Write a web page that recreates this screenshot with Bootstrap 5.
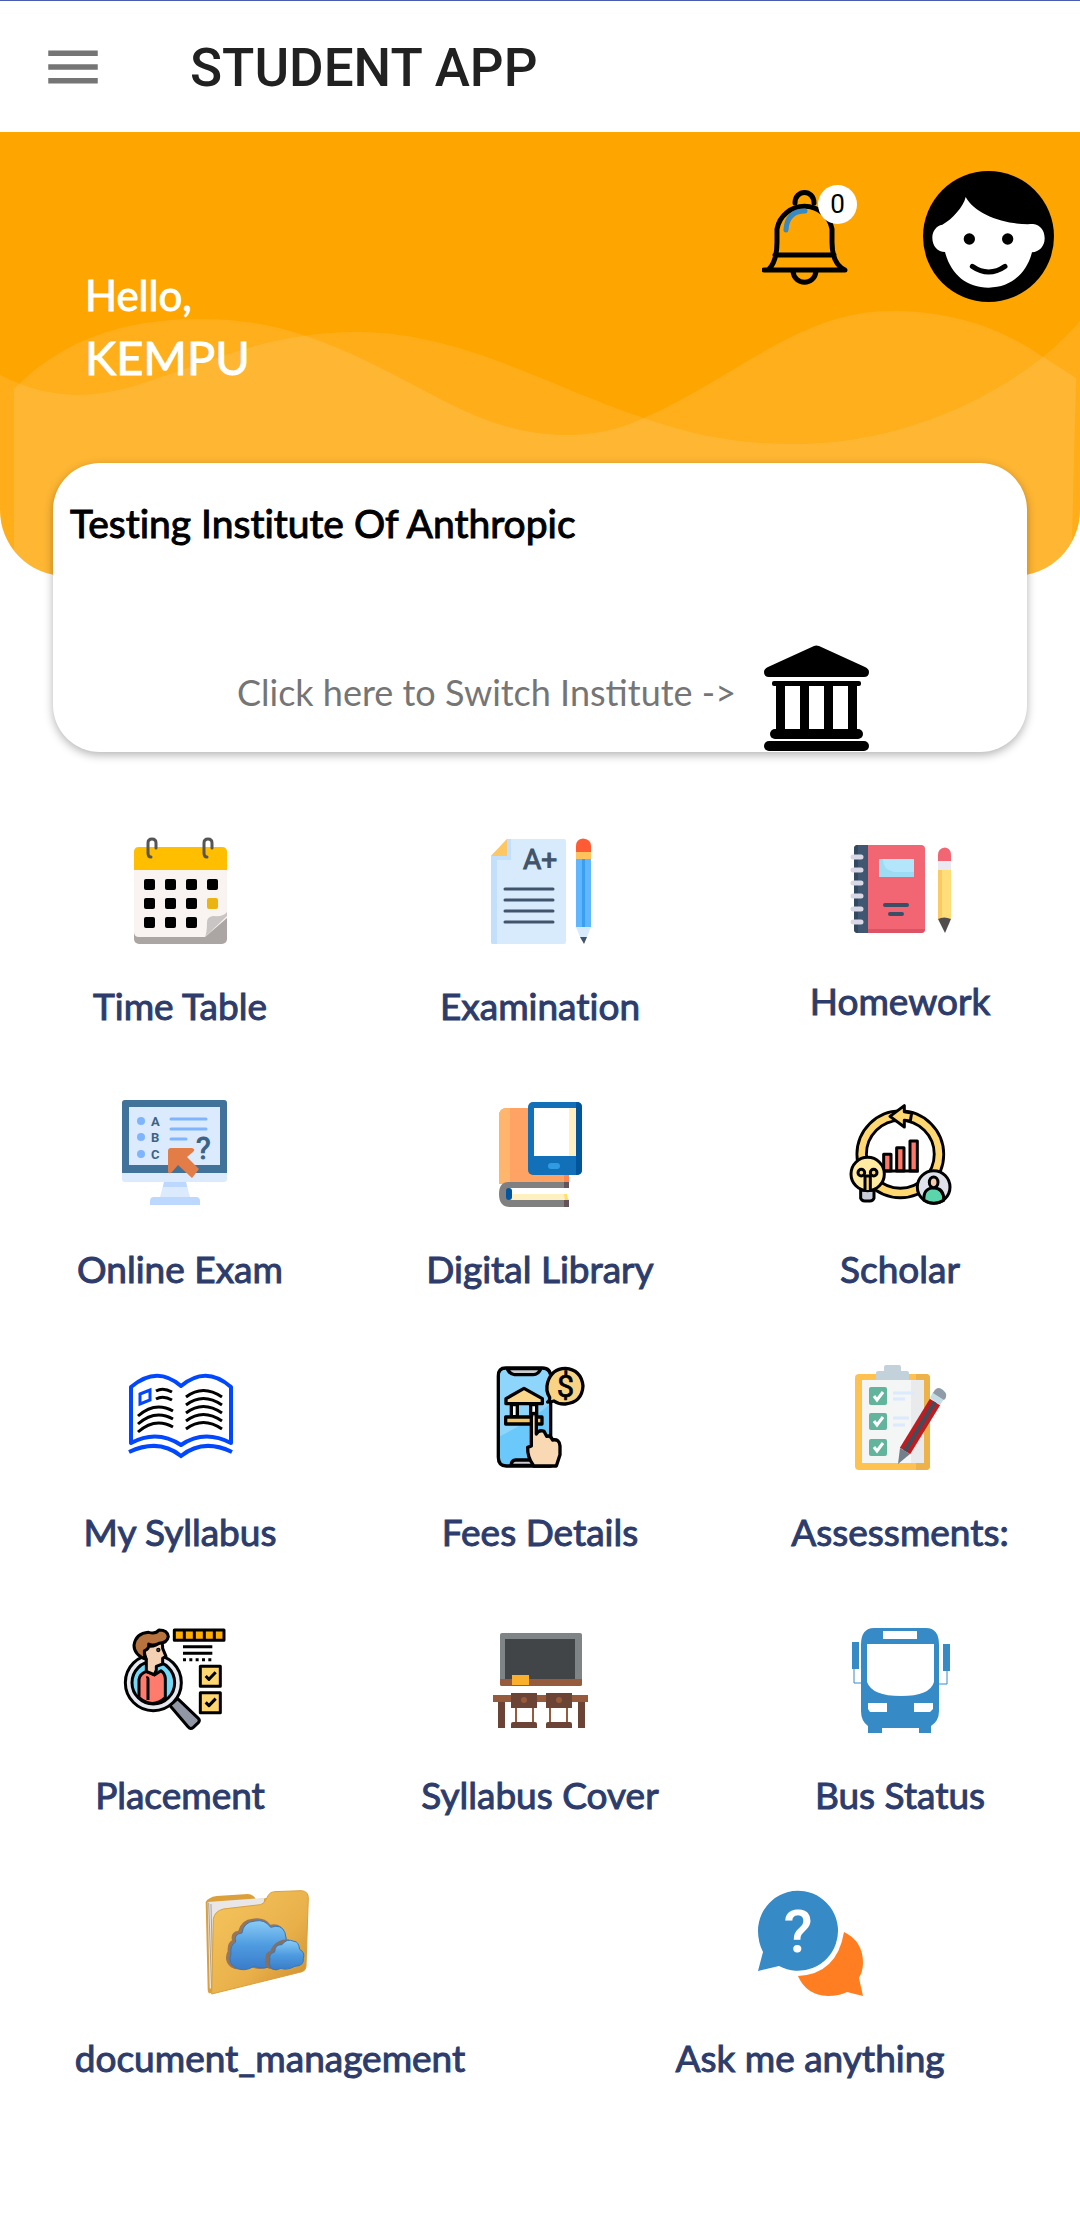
<!DOCTYPE html>
<html lang="en">
<head>
<meta charset="utf-8">
<meta name="viewport" content="width=device-width, initial-scale=1">
<title>Student App</title>
<link href="https://cdn.jsdelivr.net/npm/bootstrap@5.3.0/dist/css/bootstrap.min.css" rel="stylesheet">
<style>
  body { background: #fff; font-family: Lato, sans-serif; color: #000; font-variant-ligatures: none; }
  svg { display: block; flex: none; }
  .topbar { height: 132px; border-top: 1px solid #4a5bb0; padding: 0 40px; gap: 84px; }
  .topbar h1 { font: 500 53px/66px Roboto, sans-serif; color: #212121; padding-top: 3px; }
  .heavy { -webkit-text-stroke: 1px currentColor; }
  .hero { background: #ffa500; height: 444px; border-radius: 0 0 66px 66px; padding: 39px 26px 0 85px; overflow: hidden; }
  .waves { position: absolute; inset: 0; width: 100%; height: 100%; }
  .greeting { padding-top: 97px; color: #fff; }
  .hello { font-size: 42px; line-height: 54px; }
  .student { font-size: 47px; line-height: 70px; }
  .bell { margin: 12px 66px 0 0; }
  .count { position: absolute; top: 2px; right: 0; width: 39px; height: 39px; font: 400 26px/39px Roboto, sans-serif; }
  .institute { margin: -113px 53px 0; border-radius: 47px; padding: 36px 17px 0; box-shadow: 0 3px 10px rgba(0,0,0,.3); }
  .institute h2 { font-size: 39px; line-height: 48px; }
  .switch { margin: 98px auto 0; padding: 0 0 0 26px; gap: 28px; color: #757575; font-size: 36px; line-height: 48px; }
  .switch span { padding-bottom: 13px; }
  .tiles { margin-top: 84px; }
  .tile { color: #2d3c6b; font-size: 37px; line-height: 48px; gap: 34px; margin-bottom: 69px; }
</style>
<script src="https://cdn.jsdelivr.net/npm/bootstrap@5.3.0/dist/js/bootstrap.bundle.min.js"></script>
</head>
<body>
<header class="topbar d-flex align-items-center">
  <button class="btn p-0 border-0" type="button" aria-label="Menu">
    <svg width="66" height="66" viewBox="0 0 24 24" fill="#757575"><path d="M3 18h18v-2H3v2zm0-5h18v-2H3v2zm0-7v2h18V6H3z"/></svg>
  </button>
  <h1 class="m-0">STUDENT APP</h1>
</header>

<main>
<section class="hero position-relative d-flex">
  <svg class="waves" viewBox="0 0 1080 444" preserveAspectRatio="none" fill="#fff">
    <path fill-opacity=".1" d="M0 243C45 266 85 268 135 254C215 228 270 200 358 200C460 200 550 255 644 286C700 306 745 312 795 312C890 312 980 275 1043 225Q1064 208 1080 189V444H0Z"/>
    <path fill-opacity=".11" d="M14 257C60 210 120 187 200 187C240 187 275 193 306 204C420 244 470 303 568 303C594 303 618 298 644 286C740 243 800 179 892 179C950 179 1000 195 1043 225Q1062 237 1076 246L1071 444H14Z"/>
  </svg>
  <div class="greeting position-relative heavy">
    <div class="hello">Hello,</div>
    <div class="student">KEMPU</div>
  </div>
  <div class="position-relative d-flex align-items-start ms-auto">
    <button class="bell btn p-0 border-0 position-relative" type="button" aria-label="Notifications">
      <svg width="95" height="108" viewBox="0 0 95 108" fill="none" stroke="#000" stroke-width="5" stroke-linecap="round" stroke-linejoin="round">
        <path d="M33 20C33 6 52 6 52 20M31 88C32 103 53 103 54 88"/>
        <path d="M2 87H83Q70 81 70 59V46A28 28 0 0 0 15 46V59Q15 78 7 86M13 72H72"/>
        <path stroke="#368ac6" d="M24 47Q25 28 43 28"/>
      </svg>
      <span class="count bg-white rounded-circle text-black">0</span>
    </button>
    <a href="#" aria-label="Profile">
      <svg width="131" height="131" viewBox="0 0 393 393">
        <circle cx="196.500" cy="196.500" r="196.500"/>
        <path fill="#fff" d="M128 78C155 130 250 164 330 159C353 161 365 180 365 202C365 226 349 243 327 244C311 306 264 350 197 350C130 350 83 309 66 243C44 243 28 225 28 200C28 180 40 164 58 161C88 145 122 106 128 78Z"/>
        <circle cx="139" cy="204" r="17"/><circle cx="254" cy="204" r="17"/>
        <path d="M148 286Q197 320 246 286" fill="none" stroke="#000" stroke-width="15" stroke-linecap="round"/>
      </svg>
    </a>
  </div>
</section>

<section class="institute bg-white position-relative d-flex flex-column">
  <h2 class="heavy m-0 fw-normal">Testing Institute Of Anthropic</h2>
  <button class="switch btn border-0 d-flex align-items-center" type="button">
    <span>Click here to Switch Institute -&gt;</span>
    <svg width="105" height="107" viewBox="0 0 105 107" fill="#000">
      <path d="M50 1Q52 0 55 1L101 22Q105 24 105 27Q105 32 100 32H5Q0 32 0 27Q0 24 4 22Z"/>
      <rect x="8" y="36" width="89" height="5" rx="2"/><path d="M12 39h9v46h-9zM36 39h9v46h-9zM60 39h9v46h-9zM84 39h9v46h-9z"/>
      <rect x="6" y="84" width="93" height="10" rx="5"/><rect y="96" width="105" height="10" rx="5"/>
    </svg>
  </button>
</section>

<nav class="tiles row g-0 text-center" aria-label="Modules">
  <div class="col-4"><a href="#" class="tile d-flex flex-column align-items-center text-decoration-none">
    <svg width="132" height="112" viewBox="0 0 132 112">
      <rect x="20" y="12" width="93" height="96" rx="5" fill="#aba6a3"/>
      <path fill="#f9f3f1" d="M20 32h93v50L91 101H25q-5 0-5-5z"/><path fill="#c9c5c4" d="M113 76V80L91 101Q93 97 93 86Q93 81 99 80Q110 81 113 76Z"/>
      <path fill="#ffbe00" d="M20 34V16q0-5 5-5h83q5 0 5 5v18z"/>
      <path fill="none" stroke="#555" stroke-width="3" stroke-linecap="round" d="M42 12V7Q42 3 38 3T34 7V17Q34 21 37 21M98 12V7Q98 3 94 3T90 7V17Q90 21 93 21"/>
      <g fill="#000"><rect x="30" y="43" width="11" height="11" rx="2"/><rect x="51" y="43" width="11" height="11" rx="2"/><rect x="72" y="43" width="11" height="11" rx="2"/><rect x="93" y="43" width="11" height="11" rx="2"/><rect x="30" y="62" width="11" height="11" rx="2"/><rect x="51" y="62" width="11" height="11" rx="2"/><rect x="72" y="62" width="11" height="11" rx="2"/><rect x="30" y="81" width="11" height="11" rx="2"/><rect x="51" y="81" width="11" height="11" rx="2"/><rect x="72" y="81" width="11" height="11" rx="2"/></g>
      <rect x="93" y="62" width="11" height="11" rx="2" fill="#ecb413"/>
    </svg><span class="heavy">Time Table</span></a></div>
  <div class="col-4"><a href="#" class="tile d-flex flex-column align-items-center text-decoration-none">
    <svg width="132" height="112" viewBox="0 0 132 112">
      <path fill="#d8ebfd" d="M37 3H90q2 0 2 2V106q0 2-2 2H19q-2 0-2-2V24z"/><path fill="#c2dffb" d="M33 3h4V24H23V108H19q-2 0-2-2V20z"/><path fill="#ffc761" d="M33 3V20H17z"/>
      <text x="49" y="33" font-family="Roboto, sans-serif" font-size="28" fill="#40546b" stroke="#40546b">A+</text>
      <path stroke="#40546b" stroke-width="3" stroke-linecap="round" d="M31 53H79M31 64H79M31 75H79M31 86H79"/>
      <path fill="#ff5c36" d="M102 17V10q0-7 7-7.500q8 .5 8 7.500v7z"/><path fill="#ffc25c" d="M102 16h15v7h-15z"/><path fill="#61b7ff" d="M102 23h15v68h-15z"/><path fill="#3b9ff0" d="M108 23h3v68h-3z"/><path fill="#d8ebfd" d="M102 91h15l-4 10h-7z"/><path fill="#40546b" d="M106 101h7l-3 7z"/>
    </svg><span class="heavy">Examination</span></a></div>
  <div class="col-4"><a href="#" class="tile d-flex flex-column align-items-center text-decoration-none">
    <svg width="132" height="107" viewBox="0 0 132 107">
      <rect x="20" y="9" width="71" height="88" rx="4" fill="#f26674"/><path fill="#dc5366" d="M30 93h61q0 4-4 4H30z"/><path fill="#3f5770" d="M24 9h10v88H24q-4 0-4-4V13q0-4 4-4z"/><path fill="#314a61" d="M24 9V97q-4 0-4-4V13q0-4 4-4z"/>
      <path stroke="#d9d8e6" stroke-width="5" stroke-linecap="round" d="M19 21h8M19 34h8M19 47h8M19 60h8M19 73h8M19 86h8"/>
      <path fill="#9edcf4" d="M45 23h35v18H45z"/><path fill="#b4e6fb" d="M49 23h31v13H60Q49 34 49 23z"/>
      <path stroke="#3a4f66" stroke-width="4" stroke-linecap="round" d="M51 69h22M56 78h12"/>
      <path fill="#f26674" d="M104 26V19q0-7 7-7.500q6 .5 6 7.500v7z"/><path fill="#eae9f2" d="M104 25h13v9h-13z"/><path fill="#ffdd78" d="M104 34h13v49h-13z"/><path fill="#fcca62" d="M104 34h4v49h-4z"/><path fill="#524d4d" d="M104 83q6-3 13 0l-6 14z"/>
    </svg><span class="heavy">Homework</span></a></div>

  <div class="col-4"><a href="#" class="tile d-flex flex-column align-items-center text-decoration-none">
    <svg width="132" height="112" viewBox="0 0 132 112">
      <rect x="8" y="1" width="105" height="82" rx="3" fill="#dceafd"/><path fill="#41739a" d="M8 74V4q0-3 3-3h99q3 0 3 3v70z"/><path fill="#dceafd" d="M15 8h91v58H15z"/>
      <g fill="#7fb4ff"><circle cx="27" cy="22" r="4"/><circle cx="27" cy="38" r="4"/><circle cx="27" cy="55" r="4"/></g>
      <path stroke="#7fb4ff" stroke-width="3" stroke-linecap="round" d="M57 20H92M57 30H92M57 40H72"/>
      <g font-family="Roboto, sans-serif" font-weight="700" font-size="13" fill="#3a6385"><text x="37" y="27">A</text><text x="37" y="43">B</text><text x="37" y="60">C</text><text x="82" y="60" font-size="31" font-weight="400" stroke="#3a6385">?</text></g>
      <path fill="#e37d47" d="M57 49H78q4 1 1 4l-6 5 12 12-7 9-14-13-6 7q-4 3-4-1V52q0-3 3-3z"/>
      <path fill="#dceafd" d="M50 83h22l4 15H46z"/><path fill="#bcd8ff" d="M50 83h22l1 5H49zM40 98H82q4 0 4 4v4H36v-4q0-4 4-4z"/>
    </svg><span class="heavy">Online Exam</span></a></div>
  <div class="col-4"><a href="#" class="tile d-flex flex-column align-items-center text-decoration-none">
    <svg width="132" height="112" viewBox="0 0 132 112">
      <path fill="#ffa364" d="M33 9H95V85H25V17q0-8 8-8z"/><path fill="#ffb56b" d="M33 9h3V85H25V17q0-8 8-8z"/><path fill="#ff8655" d="M90 76h5v8h-5z"/>
      <path fill="#808080" d="M95 83v6H38q-6 0-6 6t6 6H95v7H36Q25 108 25 95T36 83z"/><path fill="#645358" d="M90 83h5v6h-5zM90 101h5v7h-5z"/>
      <path fill="#fff" d="M36 89H95q-3 6 0 12H36z"/><path fill="#fff0c2" d="M36 95H93q0 4 2 6H36z"/><path fill="#ffe064" d="M90 95h3q0 4 2 6h-4z"/><rect x="32" y="89" width="6" height="12" rx="3" fill="#0055a0"/>
      <rect x="54" y="3" width="54" height="73" rx="5" fill="#1170b8"/><path fill="#00559b" d="M102 3q6 0 6 5V71q0 5-6 5z"/><path fill="#fff" d="M60 9h42v48H60z"/><path fill="#fff0c2" d="M95 9h7v48h-7z"/><rect x="74" y="64" width="12" height="6" rx="3" fill="#2f9be0"/>
    </svg><span class="heavy">Digital Library</span></a></div>
  <div class="col-4"><a href="#" class="tile d-flex flex-column align-items-center text-decoration-none">
    <svg width="132" height="112" viewBox="0 0 132 112">
      <g transform="translate(6 -4) scale(.3333)" stroke="#000" stroke-width="9" stroke-linejoin="round">
        <circle cx="181" cy="178" r="116" fill="none" stroke-width="37"/><circle cx="181" cy="178" r="116" fill="none" stroke="#ffd770" stroke-width="20"/>
        <path fill="#ffd770" d="M150 64L193 32V50L215 54 211 78 193 76V96Z"/>
        <path fill="#fe7769" d="M131 228V178h22v50zM170 228V158h22v70zM210 228V138h22v90z"/><path d="M128 228H236"/>
        <path fill="#c9ccd8" d="M62 286h40v24q-3 8-12 8H74q-9 0-12-8z"/><circle cx="83" cy="237" r="50" fill="#ffeaa1"/>
        <path fill="#ffd770" d="M75 285V243h16v42"/><circle cx="64" cy="233" r="10" fill="#ffd770"/><circle cx="101" cy="233" r="10" fill="#ffd770"/>
        <circle cx="281" cy="276" r="49" fill="#dfe1ea"/><path fill="#5bd6ac" d="M252 316Q249 280 281 278Q313 280 311 316Q281 333 252 316Z"/><ellipse cx="281" cy="262" rx="13" ry="16" fill="#f6cba7"/>
      </g>
    </svg><span class="heavy">Scholar</span></a></div>

  <div class="col-4"><a href="#" class="tile d-flex flex-column align-items-center text-decoration-none">
    <svg width="132" height="112" viewBox="0 0 132 112" fill="none" stroke-width="3">
      <path stroke="#0047ff" stroke-width="4" stroke-linejoin="round" d="M17 81V25Q43 3 67 24Q92 3 117 25V81Q90 67 67 83Q43 67 17 81Z"/>
      <path stroke="#0047ff" stroke-width="4" d="M15 90Q45 76 67 94Q89 76 118 90"/>
      <path stroke="#0047ff" d="M26 32L36 28V38L26 42Z"/>
      <path stroke="#000" d="M24 54Q41 39 59 49M24 62Q41 47 59 57M24 70Q41 55 59 65M42 29Q49 25 58 30M42 37Q49 33 58 38M72 35Q89 22 108 35M72 43Q89 30 108 43M72 51Q89 38 108 51M72 59Q89 46 108 59M72 67Q89 54 108 67"/>
    </svg><span class="heavy">My Syllabus</span></a></div>
  <div class="col-4"><a href="#" class="tile d-flex flex-column align-items-center text-decoration-none">
    <svg width="132" height="112" viewBox="0 0 132 112">
      <g transform="translate(11 -4) scale(.3333)" stroke="#000" stroke-width="10" stroke-linejoin="round" stroke-linecap="round">
        <path fill="#6bc8fa" d="M62 30H172Q197 30 197 58V324H64Q40 324 40 298V54Q40 30 62 30Z"/><path stroke="none" fill="#8ed5fc" d="M62 35H170Q192 36 192 60V140Q150 180 45 235V54Q45 36 62 35Z"/>
        <path fill="#cbcbd0" d="M66 32H168Q160 50 145 50H88Q76 50 66 32ZM78 322Q80 306 92 306H150V322Z"/>
        <path fill="#fbd68b" d="M63 137V122L117 91 172 122V137Z"/><path fill="#fff" d="M79 140h18v36H79zM137 140h18v36h-18z"/><path fill="#f8c462" d="M62 177H171V198H62z"/>
        <path fill="#f8d9b3" d="M144 320Q127 297 128 268L139 264V178Q140 166 147 166T154 178V228Q162 214 177 220L185 235Q196 231 203 246Q223 242 225 264V290L214 324H146Z"/>
        <path fill="#f9d384" d="M188 132Q195 129 194 118Q181 98 188 73Q200 32 241 31Q289 35 294 84Q291 133 241 138Q220 139 207 129Q199 132 188 132Z"/>
        <text x="215" y="118" font-family="Roboto, sans-serif" font-size="93" stroke-width="2" fill="#000">$</text>
      </g>
    </svg><span class="heavy">Fees Details</span></a></div>
  <div class="col-4"><a href="#" class="tile d-flex flex-column align-items-center text-decoration-none">
    <svg width="132" height="112" viewBox="0 0 132 112">
      <rect x="21" y="12" width="75" height="96" rx="4" fill="#ffc251"/><path fill="#eeb24b" d="M82 12h10q4 0 4 4v88q0 4-4 4H82z"/><path fill="#f4f5f5" d="M28 18h62v83H28z"/><path fill="#e8eaeb" d="M77 18h13v83H77z"/>
      <path fill="#c3d1da" d="M42 18v-7q0-2 2-2h6V5q0-2 2-2h13q2 0 2 2v4h6q2 0 2 2v7z"/>
      <g fill="#62b49c"><rect x="35" y="25" width="18" height="18" rx="2"/><rect x="35" y="51" width="18" height="17" rx="2"/><rect x="35" y="77" width="18" height="17" rx="2"/></g>
      <path fill="none" stroke="#fff" stroke-width="3" d="M40 34l3 4 6-8M40 59l3 4 6-8M40 85l3 4 6-8"/>
      <path stroke="#dceafd" stroke-width="3" d="M59 31H80M59 37H71M59 56H75M59 63H71"/>
      <path stroke="#bd1d20" stroke-width="12" d="M101 40L71 89"/><path stroke="#404d5c" stroke-width="4" d="M101 40L71 89"/>
      <path fill="#c5dce7" d="M96 36L106 43 110 37 99 30z"/><path fill="#8f9ca8" d="M99 31Q103 23 109 28T110 38z"/><path fill="#73808c" d="M66 86L76 92 64 102z"/>
    </svg><span class="heavy">Assessments:</span></a></div>

  <div class="col-4"><a href="#" class="tile d-flex flex-column align-items-center text-decoration-none">
    <svg width="132" height="112" viewBox="0 0 132 112">
      <g transform="translate(1 -5) scale(.3333)" stroke="#000" stroke-width="9" stroke-linejoin="round">
        <path fill="#9297a5" d="M164 256L188 236 250 295Q256 301 250 308L235 322Q226 330 219 320Z"/>
        <circle cx="115" cy="188" r="84" fill="#e6e9ef"/><circle cx="115" cy="188" r="64" fill="#73d7f5"/>
        <path fill="#ff7c6d" d="M72 233V178Q74 162 94 154L118 165 138 152Q150 160 151 176V233Q113 268 72 233ZM94 174Q100 172 99 182V240"/>
        <path fill="#f4d1b3" d="M94 154V118Q82 90 96 77Q118 83 138 64Q143 70 143 85L153 109 143 115V132L124 139V150L118 164Z"/>
        <path fill="#b6733d" d="M93 118Q57 105 57 76Q62 40 101 37Q122 43 132 30Q158 30 160 50Q156 70 132 70Q112 79 101 72Q104 86 88 93Q86 105 93 118Z"/><circle cx="130" cy="90" r="2"/>
        <path fill="#ffae00" d="M178 30H327V61H178z"/><path d="M208 30V61M238 30V61M268 30V61M298 30V61"/>
        <path d="M204 80H292M204 100H292"/><path stroke-dasharray="9 10" d="M204 119H292"/>
        <path fill="#ffd670" d="M256 139h60v60h-60zM256 218h60v60h-60z"/><path fill="none" d="M272 168L282 178 302 157M272 247L282 257 302 236"/>
      </g>
    </svg><span class="heavy">Placement</span></a></div>
  <div class="col-4"><a href="#" class="tile d-flex flex-column align-items-center text-decoration-none">
    <svg width="132" height="112" viewBox="0 0 132 112">
      <rect x="26" y="8" width="82" height="53" rx="2" fill="#7f8487"/><path fill="#414547" d="M31 14h70v40H31z"/><path fill="#965a3d" d="M26 54h82v5q0 2-2 2H28q-2 0-2-2z"/><path fill="#fbb02d" d="M38 50h17v10H38z"/>
      <path fill="#965a3d" d="M19 70h95v7H19z"/><path fill="#6c4436" d="M24 77h7v26h-7zM104 77h7v26h-7z"/>
      <path stroke="#965a3d" stroke-width="2" d="M42 83V97M59 83V97M76 83V97M93 83V97"/>
      <path fill="#6c4436" d="M37 68h26v15H37zM37 103v-4q0-2 2-2h22q2 0 2 2v4zM72 68h26v15H72zM72 103v-4q0-2 2-2h22q2 0 2 2v4z"/><circle cx="50" cy="75" r="3" fill="#965a3d"/><circle cx="85" cy="75" r="3" fill="#965a3d"/>
    </svg><span class="heavy">Syllabus Cover</span></a></div>
  <div class="col-4"><a href="#" class="tile d-flex flex-column align-items-center text-decoration-none">
    <svg width="132" height="112" viewBox="0 0 132 112">
      <path fill="#368ac6" d="M40 3H92Q105 3 105 20V86Q105 96 97 101V108H85V103H48V108H34V101Q27 96 27 86V20Q27 3 40 3Z"/>
      <path fill="#368ac6" d="M18 17h7v27h-7zM109 19h7v27h-7z"/><path fill="none" stroke="#368ac6" stroke-width="1" d="M20 44V58H27M113 45V59H105"/>
      <path fill="#fff" d="M49 6h34v8H49zM33 19H100V57Q96 71 67 71T33 57zM34 78h19v9H36l-2-3zM80 78h19v6l-3 3H80z"/>
    </svg><span class="heavy">Bus Status</span></a></div>

  <div class="col-6"><a href="#" class="tile d-flex flex-column align-items-center text-decoration-none">
    <svg width="132" height="112" viewBox="0 0 132 112">
      <defs>
        <linearGradient id="gold" x1="0" y1="0" x2="1" y2="1"><stop stop-color="#f5c65e"/><stop offset=".6" stop-color="#e9b04a"/><stop offset="1" stop-color="#c98a2c"/></linearGradient>
        <linearGradient id="sky" x1="0" y1="0" x2="0" y2="1"><stop stop-color="#8accf6"/><stop offset=".5" stop-color="#4e9be0"/><stop offset="1" stop-color="#3a7cc8"/></linearGradient>
      </defs>
      <g transform="translate(-9 -6) scale(.3333)">
        <path fill="#dca03b" d="M32 60Q40 46 65 42L158 36Q178 38 182 52L215 48V280L45 334Q38 334 38 320Z"/>
        <path fill="#e8e6e6" d="M38 60L208 48 205 70 60 100 54 325 44 318Z"/><path fill="none" stroke="#a9a39d" stroke-width="3" d="M41 62L50 325M48 66L54 320"/>
        <path fill="url(#gold)" stroke="#d99f3b" stroke-width="3" d="M55 112Q58 88 85 81L196 68Q206 66 211 56L221 38Q226 30 238 29L320 26Q340 28 340 48L333 255Q332 265 322 269L50 336Z"/>
        <path fill="#9a7655" d="M108 256Q84 235 98 208Q96 184 111 175Q105 150 130 146Q140 112 173 110Q208 104 226 128Q258 122 268 150Q280 175 270 180L225 254Q195 268 170 255Q130 270 108 256Z"/>
        <path fill="url(#sky)" stroke="#3278c0" stroke-width="3" d="M121 256Q98 245 108 216Q104 190 122 180Q115 156 141 153Q145 120 180 117Q209 111 227 136Q260 125 270 152Q280 185 262 215L232 252Q205 263 178 253Q145 272 121 256Z"/>
        <path fill="#856f60" d="M222 260Q205 250 212 230Q210 212 226 207Q240 172 280 172L300 190 260 258Z"/>
        <path fill="url(#sky)" stroke="#3278c0" stroke-width="3" d="M229 260Q218 245 225 231Q220 217 239 210Q240 187 261 188Q275 168 297 178Q311 178 314 202Q331 211 325 230Q328 251 300 253Q275 266 258 259Q243 268 229 260Z"/>
      </g>
    </svg><span class="heavy">document_management</span></a></div>
  <div class="col-6"><a href="#" class="tile d-flex flex-column align-items-center text-decoration-none">
    <svg width="132" height="112" viewBox="0 0 132 112">
      <path fill="#ff7e22" d="M100 44Q119 53 119 75Q119 83 115 90L119 108 103 104Q95 108 84 108Q62 107 54 88Q93 86 100 44Z"/>
      <path fill="#368ac6" d="M14 43A40 40 0 1 1 35 78L14 83 19 64Q14 54 14 43Z"/>
      <text x="54" y="64" text-anchor="middle" font-family="Roboto, sans-serif" font-weight="500" font-size="60" fill="#fff">?</text>
    </svg><span class="heavy">Ask me anything</span></a></div>
</nav>
</main>
</body>
</html>
